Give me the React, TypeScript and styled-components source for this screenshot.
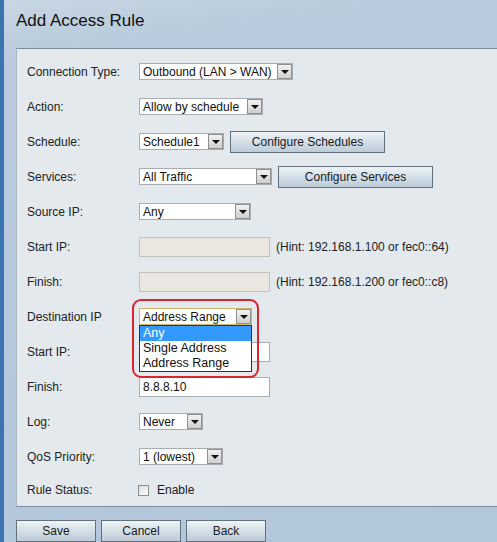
import React from "react";
import styled, { createGlobalStyle } from "styled-components";

const GlobalStyle = createGlobalStyle`
  html, body {
    margin: 0;
    padding: 0;
    background: #b6c9db;
    overflow: hidden;
  }
  body {
    font-family: "Liberation Sans", Arial, sans-serif;
    font-size: 12px;
    color: #1a1a1a;
  }
`;

const Page = styled.div`
  width: 497px;
  height: 542px;
  border-left: 4px solid #3b74b3;
  box-sizing: border-box;
  background: linear-gradient(172deg, #c8d7e5 0%, #b9cbdc 9%, #b3c7da 100%);
  display: flex;
  flex-direction: column;
  overflow: hidden;
`;

const Header = styled.div`
  height: 48px;
  padding-left: 12px;
  display: flex;
  align-items: center;
`;

const Title = styled.h1`
  margin: 0;
  font-size: 17px;
  font-weight: normal;
  color: #111;
  padding-bottom: 6px;
`;

const Panel = styled.div`
  margin-left: 12px;
  background: #e3e9ed;
  border-top: 1px solid #7c8c99;
  border-left: 1px solid #a9b7c3;
  border-bottom: 1px solid #7c8c99;
  padding: 5px 0 0 10px;
  display: flex;
  flex-direction: column;
`;

const Row = styled.div<{ $top?: boolean; $h?: number }>`
  height: ${p => p.$h ?? 35}px;
  display: flex;
  align-items: center;
  position: relative;
  z-index: ${p => (p.$top ? 2 : "auto")};
`;

const Label = styled.div`
  width: 112px;
  flex-shrink: 0;
  color: #222;
`;

const Field = styled.div`
  display: flex;
  align-items: center;
  gap: 6px;
  position: relative;
`;

const SelectBox = styled.div<{ $w: number; $focus?: boolean }>`
  width: ${p => p.$w}px;
  height: 17px;
  box-sizing: border-box;
  background: #fff;
  border: 1px solid ${p => (p.$focus ? "#d2b36a" : "#a7adb3")};
  display: flex;
  align-items: center;
  justify-content: space-between;
  padding-left: 3px;
  white-space: nowrap;
  color: #111;
`;

const ArrowBtn = styled.span`
  width: 15px;
  height: 15px;
  box-sizing: border-box;
  border: 1px solid #8f8f8f;
  background: linear-gradient(#f2f2f2, #cfcfcf);
  display: flex;
  align-items: center;
  justify-content: center;
  flex-shrink: 0;
`;

const Tri = styled.span`
  width: 0;
  height: 0;
  border-left: 4px solid transparent;
  border-right: 4px solid transparent;
  border-top: 4px solid #111;
`;

const TextBox = styled.div<{ $disabled?: boolean }>`
  width: 131px;
  height: 20px;
  box-sizing: border-box;
  border: 1px solid ${p => (p.$disabled ? "#c2c2bf" : "#a7adb3")};
  background: ${p => (p.$disabled ? "#ebe8e2" : "#fff")};
  padding-left: 3px;
  display: flex;
  align-items: center;
  color: #111;
`;

const Hint = styled.span`
  margin-left: 6px;
  color: #222;
`;

const Button = styled.button<{ $w: number }>`
  width: ${p => p.$w}px;
  height: 22px;
  font-family: "Liberation Sans", Arial, sans-serif;
  font-size: 12px;
  color: #1a1a1a;
  border: 1px solid #62717e;
  background: linear-gradient(#eef3f6 0%, #d4dfe7 50%, #bccbd7 100%);
  padding: 0;
`;

const Highlight = styled.div`
  position: absolute;
  left: -7px;
  top: -9px;
  width: 127px;
  height: 79px;
  box-sizing: border-box;
  border: 2px solid #d8262c;
  border-radius: 9px;
  pointer-events: none;
  z-index: 3;
`;

const DropList = styled.div`
  position: absolute;
  left: 0;
  top: 17px;
  width: 113px;
  box-sizing: border-box;
  border: 1px solid #333;
  background: #fff;
  z-index: 2;
  font-size: 12.5px;
`;

const DropItem = styled.div<{ $active?: boolean }>`
  height: 15px;
  line-height: 15px;
  padding-left: 3px;
  background: ${p => (p.$active ? "#3399ff" : "#fff")};
  color: ${p => (p.$active ? "#fff" : "#111")};
  white-space: nowrap;
`;

const CheckLabel = styled.label`
  display: flex;
  align-items: center;
  gap: 8px;
  margin-left: -1px;
`;

const CheckBox = styled.span`
  width: 11px;
  height: 11px;
  box-sizing: border-box;
  border: 1px solid #8e8f8f;
  background: linear-gradient(135deg, #dcdcdc, #fff);
`;

const ButtonBar = styled.div`
  padding: 13px 0 0 12px;
  display: flex;
  gap: 5px;
`;

function Select({ w, value, focus }: { w: number; value: string; focus?: boolean }) {
  return (
    <SelectBox $w={w} $focus={focus}>
      <span>{value}</span>
      <ArrowBtn>
        <Tri />
      </ArrowBtn>
    </SelectBox>
  );
}

export default function App() {
  return (
    <>
      <GlobalStyle />
      <Page>
        <Header>
          <Title>Add Access Rule</Title>
        </Header>
        <Panel>
          <Row>
            <Label>Connection Type:</Label>
            <Select w={154} value="Outbound (LAN > WAN)" />
          </Row>
          <Row>
            <Label>Action:</Label>
            <Select w={124} value="Allow by schedule" />
          </Row>
          <Row>
            <Label>Schedule:</Label>
            <Field>
              <Select w={85} value="Schedule1" />
              <Button $w={155}>Configure Schedules</Button>
            </Field>
          </Row>
          <Row>
            <Label>Services:</Label>
            <Field>
              <Select w={133} value="All Traffic" />
              <Button $w={155}>Configure Services</Button>
            </Field>
          </Row>
          <Row>
            <Label>Source IP:</Label>
            <Select w={112} value="Any" />
          </Row>
          <Row>
            <Label>Start IP:</Label>
            <TextBox $disabled />
            <Hint>(Hint: 192.168.1.100 or fec0::64)</Hint>
          </Row>
          <Row>
            <Label>Finish:</Label>
            <TextBox $disabled />
            <Hint>(Hint: 192.168.1.200 or fec0::c8)</Hint>
          </Row>
          <Row $top>
            <Label>Destination IP</Label>
            <Field>
              <Select w={113} value="Address Range" focus />
              <DropList>
                <DropItem $active>Any</DropItem>
                <DropItem>Single Address</DropItem>
                <DropItem>Address Range</DropItem>
              </DropList>
              <Highlight />
            </Field>
          </Row>
          <Row>
            <Label>Start IP:</Label>
            <TextBox />
          </Row>
          <Row>
            <Label>Finish:</Label>
            <TextBox>8.8.8.10</TextBox>
          </Row>
          <Row>
            <Label>Log:</Label>
            <Select w={64} value="Never" />
          </Row>
          <Row>
            <Label>QoS Priority:</Label>
            <Select w={84} value="1 (lowest)" />
          </Row>
          <Row $h={32}>
            <Label>Rule Status:</Label>
            <CheckLabel>
              <CheckBox />
              Enable
            </CheckLabel>
          </Row>
        </Panel>
        <ButtonBar>
          <Button $w={80}>Save</Button>
          <Button $w={80}>Cancel</Button>
          <Button $w={80}>Back</Button>
        </ButtonBar>
      </Page>
    </>
  );
}
